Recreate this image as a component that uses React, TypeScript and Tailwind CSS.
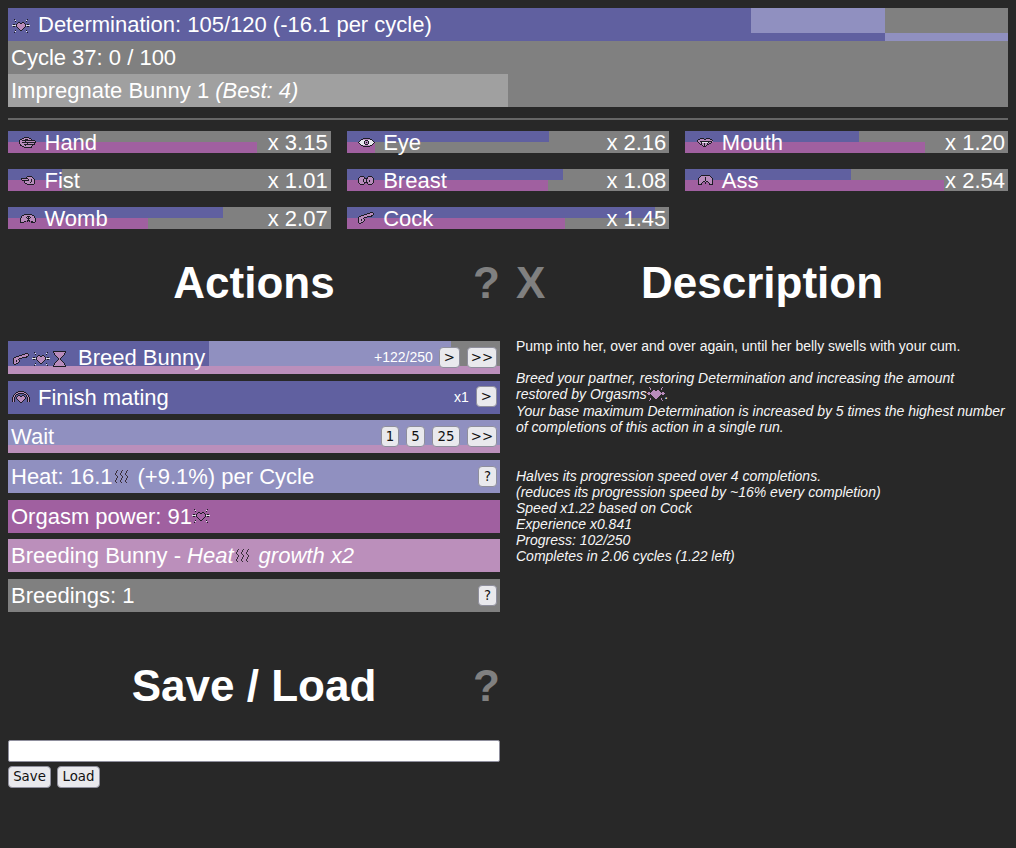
import React from "react";

const icons: Record<string, string[]> = {
  spark: [
    "..#............#..",
    "...w..........w...",
    "...#..........#...",
    "......##..##......",
    ".....#pp##pp#.....",
    ".##.#pppppppp#.##.",
    "wwww#pppppppp#wwww",
    ".##.#pppppppp#.##.",
    ".....#pppppp#.....",
    "......#pppp#......",
    ".......#pp#.......",
    "...#....##....#...",
    "...w..........w...",
    "..#............#..",
  ],
  hand: [
    ".....#####.......",
    "...##ppppp##.....",
    ".##ppp###ppp#....",
    "#pp#############.",
    "#ppppp#ppppppppp#",
    "#pp##############",
    "#ppppppp#pppppp#.",
    ".#ppp###########.",
    ".##ppp#pppppp#...",
    "...##ppppppp#....",
    ".....########....",
  ],
  fist: [
    "......#####...",
    ".....#ppppp#..",
    "#######ppppp#.",
    "#pppppp#pp#pp#",
    ".#######pp#pp#",
    "...#pppppp#pp#",
    "...#ppppp#ppp#",
    "....##ppppppp#",
    "......#######.",
  ],
  womb: [
    "....########...",
    "..##pppppppp##.",
    ".#ppppp###pppp#",
    ".#pppp#p#p#ppp#",
    "#pppppp###ppppp#",
    "#ppppppp#pppppp#",
    "#pppppp###ppppp#",
    "#ppp##.#.#.##pp#",
    "####.......####",
  ],
  eye: [
    ".....#######.....",
    "...##ppppppp##...",
    "..#wwww###wwww#..",
    ".#wwww#ppp#wwww#.",
    "#wwwww#p#p#wwwww#",
    ".#wwww#ppp#wwww#.",
    "..#wwww###wwww#..",
    "...##ppppppp##...",
    ".....#######.....",
  ],
  breast: [
    "..####....####..",
    ".#pppp#..#pppp#.",
    "#ppppp####ppppp#",
    "#pppp#pp#pppppp#",
    "#pppp#pp#pp#ppp#",
    "#pppp#pp#pp#ppp#",
    "#ppppp####ppppp#",
    ".#pppp#..#pppp#.",
    "..####....####..",
  ],
  cock: [
    "............###.",
    ".........###ppp#",
    "......###pppppp#",
    "...###ppppppp##.",
    ".##pppppp#####..",
    "#ppppp###.......",
    "#pppp#..........",
    "#pp#pp#.........",
    "#pp#pp#.........",
    "#pppp#..........",
    "#pp##...........",
    ".##.............",
  ],
  mouth: [
    "...####..####...",
    ".##pppp##pppp##.",
    "#pppppppppppppp#",
    "#pp############p",
    ".#pp#wwwwww#pp#.",
    "..#p#pp#pp#p##..",
    "...##pp#pp##....",
    ".....#p#p#......",
    "......###.......",
  ],
  ass: [
    "...#########...",
    "..#ppppppppp#..",
    ".#ppppp#ppppp#.",
    "#pppppp#pppppp#",
    "#pppppp#pppppp#",
    "#pppppp#pppppp#",
    "#pppp##p##pppp#",
    "#ppp#..#..#ppp#",
    "#pp#...#...#pp#",
    "####.......####",
  ],
  hourglass: [
    "#############",
    "#ppppppppppp#",
    ".#ppppppppp#.",
    ".#ppppppppp#.",
    "..#ppppppp#..",
    "...#ppppp#...",
    "....#ppp#....",
    ".....#p#.....",
    ".....#p#.....",
    "....#ppp#....",
    "...#ppppp#...",
    "..#ppppppp#..",
    ".#ppppppppp#.",
    ".#ppppppppp#.",
    "#ppppppppppp#",
    "#############",
  ],
  heat: [
    "...#....#....#.",
    "..#....#....#..",
    "..#....#....#..",
    ".#....#....#...",
    ".#....#....#...",
    "..#....#....#..",
    "...#....#....#.",
    "...#....#....#.",
    "..#....#....#..",
    "..#....#....#..",
    ".#....#....#...",
    ".#....#....#...",
    "..#....#....#..",
  ],
  finish: [
    "......######......",
    "....##pppppp##....",
    "...#pp######pp#...",
    "..#p##......##p#..",
    ".#p#..##..##..#p#.",
    ".#p#.#pp##pp#.#p#.",
    "#p#.#pppppppp#.#p#",
    "#p#.#pppppppp#.#p#",
    "#p#..#pppppp#..#p#",
    "#p#...#pppp#...#p#",
    "#p#....#pp#....#p#",
    "........##........",
  ],
};

const pixelColors: Record<string, string> = { "#": "#1c1c24", p: "#b98cbc", w: "#e8e8ee" };

// draws one of the pixel-art icons above, one path per colour
const Pix = ({
  name,
  color,
  fill,
  className,
}: {
  name: string;
  color?: string;
  fill?: string;
  className?: string;
}) => {
  const rows = icons[name];
  const w = Math.max(...rows.map((r) => r.length));
  const paths: Record<string, string> = {};
  rows.forEach((row, y) =>
    row.split("").forEach((ch, x) => {
      if (ch === ".") return;
      paths[ch] = (paths[ch] || "") + `M${x} ${y}h1v1h-1z`;
    })
  );
  const colorOf = (ch: string) => {
    if (ch === "p") return fill || pixelColors.p;
    return color || pixelColors[ch];
  };
  return (
    <svg
      width={w}
      height={rows.length}
      viewBox={`0 0 ${w} ${rows.length}`}
      shapeRendering="crispEdges"
      className={`inline-block align-middle ${className || ""}`}
    >
      {Object.entries(paths).map(([ch, d]) => (
        <path key={ch} d={d} fill={colorOf(ch)} />
      ))}
    </svg>
  );
};

const Btn = ({ children, className }: { children: React.ReactNode; className?: string }) => (
  <button
    className={`h-[21px] px-1 rounded-[4px] border border-[#8f8f9d] bg-[#e9e9ed] text-[13.33px] leading-[15px] text-[#111111] font-['DejaVu_Sans',sans-serif] ${className || ""}`}
  >
    {children}
  </button>
);

const stats = [
  { name: "Hand", icon: "hand", value: "x 3.15", blue: 22.3, pink: 77.2 },
  { name: "Eye", icon: "eye", value: "x 2.16", blue: 62.6, pink: 8.7 },
  { name: "Mouth", icon: "mouth", value: "x 1.20", blue: 53.9, pink: 74.4 },
  { name: "Fist", icon: "fist", value: "x 1.01", blue: 16.7, pink: 16.6 },
  { name: "Breast", icon: "breast", value: "x 1.08", blue: 66.9, pink: 62.3 },
  { name: "Ass", icon: "ass", value: "x 2.54", blue: 51.4, pink: 80.3 },
  { name: "Womb", icon: "womb", value: "x 2.07", blue: 66.6, pink: 43.4 },
  { name: "Cock", icon: "cock", value: "x 1.45", blue: 95.5, pink: 67.6 },
];

const StatBar = ({ stat }: { stat: (typeof stats)[number] }) => (
  <div className="relative h-[22px] bg-[#808080]">
    <div className="absolute left-0 top-0 h-[11px] bg-[#6060a0]" style={{ width: `${stat.blue}%` }} />
    <div className="absolute left-0 bottom-0 h-[11px] bg-[#a060a0]" style={{ width: `${stat.pink}%` }} />
    <div className="relative flex items-center justify-between h-full pl-[3px] pr-[3px] pt-[2px] leading-[22px]">
      <span className="flex items-center">
        <span className="w-[33.5px] flex justify-center -mt-[2px]">
          <Pix name={stat.icon} />
        </span>
        {stat.name}
      </span>
      <span>{stat.value}</span>
    </div>
  </div>
);

const Heading = ({ title, left, right }: { title: string; left?: string; right?: string }) => (
  <div className="relative flex justify-center h-[50px] text-[44px] leading-[52px] font-bold">
    {left && <span className="absolute left-0 top-0 text-[#808080]">{left}</span>}
    <span>{title}</span>
    {right && <span className="absolute right-0 top-0 text-[#808080]">{right}</span>}
  </div>
);

const Row = ({ className, children }: { className: string; children: React.ReactNode }) => (
  <div className={`relative h-[33px] leading-[33px] pl-[3px] pr-[3px] ${className}`}>{children}</div>
);

const Stripe = () => <div className="absolute left-0 right-0 bottom-0 h-[8px] bg-[#bb8fbb]" />;

export default function App() {
  return (
    <div className="min-h-[848px] bg-[#282828] p-2 text-[22px] text-white font-['Liberation_Sans',sans-serif]">
      {/* top bars */}
      <div className="relative h-[33px] bg-[#808080] leading-[33px]">
        <div className="absolute left-0 top-0 bottom-0 w-[87.7%] bg-[#6060a0]" />
        <div className="absolute left-[74.3%] top-0 h-[25px] w-[13.4%] bg-[#9090c0]" />
        <div className="absolute left-[87.7%] right-0 bottom-0 h-[8px] bg-[#9090c0]" />
        <div className="relative flex items-center pl-[4px]">
          <Pix name="spark" className="mr-[8px] mt-[2px]" />
          <span>Determination: 105/120 (-16.1 per cycle)</span>
        </div>
      </div>
      <Row className="bg-[#808080]">Cycle 37: 0 / 100</Row>
      <div className="relative h-[33px] bg-[#808080] leading-[33px] pl-[3px]">
        <div className="absolute left-0 top-0 bottom-0 w-1/2 bg-[#a0a0a0]" />
        <span className="relative">
          Impregnate Bunny 1 <em>(Best: 4)</em>
        </span>
      </div>

      <div className="mt-[11px] mb-[11px] h-[2px] bg-[#666666]" />

      {/* body part stats */}
      <div className="grid grid-cols-3 gap-x-4 gap-y-4">
        {stats.map((s) => (
          <StatBar key={s.name} stat={s} />
        ))}
      </div>

      <div className="mt-[28px] grid grid-cols-2 gap-x-4">
        <div>
          <Heading title="Actions" right="?" />
          <div className="mt-[34px] flex flex-col gap-[6.67px]">
            <Row className="bg-[#808080]">
              <div className="absolute left-0 top-0 h-[25px] w-[40.9%] bg-[#6060a0]" />
              <div className="absolute left-[40.9%] top-0 h-[25px] w-[49.1%] bg-[#9090c0]" />
              <Stripe />
              <div className="relative flex items-center justify-between h-[33px]">
                <span className="flex items-center">
                  <span className="flex items-center gap-[3px] ml-[2px] mr-[12px] mt-[2px]">
                    <Pix name="cock" />
                    <Pix name="spark" />
                    <Pix name="hourglass" />
                  </span>
                  Breed Bunny
                </span>
                <span className="flex items-center gap-[7px] -mt-[1px]">
                  <span className="text-sm text-white -mr-[1px]">+122/250</span>
                  <Btn>&gt;</Btn>
                  <Btn className="w-[30px] !px-0">&gt;&gt;</Btn>
                </span>
              </div>
            </Row>
            <Row className="bg-[#6060a0] flex items-center justify-between">
              <span className="flex items-center">
                <Pix name="finish" className="ml-[1px] mr-[8px]" />
                Finish mating
              </span>
              <span className="flex items-center gap-[7px] -mt-[1px]">
                <span className="text-sm text-white">x1</span>
                <Btn>&gt;</Btn>
              </span>
            </Row>
            <Row className="bg-[#9090c0]">
              <Stripe />
              <div className="relative flex items-center justify-between h-[33px]">
                <span>Wait</span>
                <span className="flex items-center gap-[7px] -mt-[1px]">
                  <Btn className="w-[18px] !px-0">1</Btn>
                  <Btn className="w-[19px] !px-0">5</Btn>
                  <Btn className="w-[28px] !px-0">25</Btn>
                  <Btn className="w-[30px] !px-0">&gt;&gt;</Btn>
                </span>
              </div>
            </Row>
            <Row className="bg-[#9090c0] flex items-center justify-between">
              <span className="flex items-center">
                Heat: 16.1
                <Pix name="heat" className="ml-[1px] mr-[9px]" color="#3a2f3a" />
                (+9.1%) per Cycle
              </span>
              <Btn className="w-[19px] !px-0">?</Btn>
            </Row>
            <Row className="bg-[#a060a0] flex items-center">
              Orgasm power: 91
              <Pix name="spark" fill="#a664a6" />
            </Row>
            <Row className="bg-[#bb8fbb] flex items-center">
              Breeding Bunny -&nbsp;<em>Heat</em>
              <Pix name="heat" className="ml-[1px] mr-[9px]" color="#3a2f3a" />
              <em>growth x2</em>
            </Row>
            <Row className="bg-[#808080] flex items-center justify-between">
              <span>Breedings: 1</span>
              <Btn className="w-[19px] !px-0">?</Btn>
            </Row>
          </div>

          <div className="mt-[48px]">
            <Heading title="Save / Load" right="?" />
          </div>
          <input className="mt-[30px] block w-full h-[22px] bg-white border border-[#8f8f9d] rounded-[2px]" />
          <div className="mt-[4px] flex gap-[6px]">
            <Btn className="h-[22px] w-[43px] !px-0">Save</Btn>
            <Btn className="h-[22px] w-[43px] !px-0">Load</Btn>
          </div>
        </div>

        <div>
          <Heading title="Description" left="X" />
          <div className="mt-[31px] text-sm leading-4 text-[#f6f6f6]">
            <p>Pump into her, over and over again, until her belly swells with your cum.</p>
            <p className="mt-4 italic">
              Breed your partner, restoring Determination and increasing the amount
              <br />
              <span className="block h-[17px]">
                restored by Orgasms
                <Pix name="spark" color="#b98cbc" className="-mt-[2px]" />.
              </span>
              Your base maximum Determination is increased by 5 times the highest number of completions of this action in a single run.
            </p>
            <p className="mt-[33px] italic">
              Halves its progression speed over 4 completions.
              <br />
              (reduces its progression speed by ~16% every completion)
              <br />
              Speed x1.22 based on Cock
              <br />
              Experience x0.841
              <br />
              Progress: 102/250
              <br />
              Completes in 2.06 cycles (1.22 left)
            </p>
          </div>
        </div>
      </div>
    </div>
  );
}
